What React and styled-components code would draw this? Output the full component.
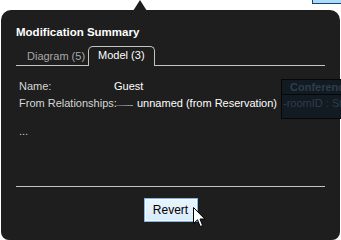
import React from "react";
import styled, { createGlobalStyle } from "styled-components";

const GlobalStyle = createGlobalStyle`
  html, body {
    margin: 0;
    padding: 0;
    background: #ffffff;
  }
  body {
    font-family: "Liberation Sans", Arial, sans-serif;
  }
`;

const Stage = styled.div`
  position: relative;
  width: 341px;
  height: 240px;
  overflow: hidden;
  background: #ffffff;
`;

const DiagramNode = styled.div`
  position: absolute;
  top: -2px;
  left: 312px;
  width: 40px;
  height: 4px;
  background: #a9dcf5;
  border: 1px solid #203c78;
`;

const Panel = styled.div`
  position: relative;
  margin: 10px 0 0 1px;
  width: 339px;
  height: 230px;
  box-sizing: border-box;
  background: #1e1e1e;
  border-radius: 10px 10px 8px 8px;
  display: flex;
  flex-direction: column;
  padding-top: 16px;

  &::before {
    content: "";
    position: absolute;
    top: -10px;
    left: 132px;
    border-left: 7px solid transparent;
    border-right: 7px solid transparent;
    border-bottom: 11px solid #1e1e1e;
  }
`;

const Title = styled.div`
  padding: 0 16px 0 15px;
  font-size: 11.5px;
  line-height: 13px;
  font-weight: bold;
  color: #ffffff;
`;

const TabBar = styled.div`
  display: flex;
  align-items: flex-end;
  margin: 7px 15px 0 15px;
  height: 20px;
`;

const Tab = styled.div`
  font-size: 11px;
  box-sizing: border-box;
  height: ${(p) => (p.$active ? "20px" : "19px")};
  line-height: ${(p) => (p.$active ? "17px" : "18px")};
  padding: ${(p) => (p.$active ? "0 9px" : "0 3px 0 11px")};
  color: ${(p) => (p.$active ? "#ffffff" : "#a8a8a8")};
  border: ${(p) => (p.$active ? "1px solid #c4c4c4" : "none")};
  border-bottom: ${(p) => (p.$active ? "none" : "1px solid #c4c4c4")};
  border-radius: ${(p) => (p.$active ? "5px 5px 0 0" : "0")};
  white-space: nowrap;
`;

const TabFill = styled.div`
  flex: 1;
  height: 19px;
  box-sizing: border-box;
  border-bottom: 1px solid #c4c4c4;
`;

const Content = styled.div`
  flex: 1;
  padding: 12px 16px 0 18px;
  font-size: 11px;
  line-height: 17px;
`;

const Row = styled.div`
  display: flex;
  align-items: center;
  white-space: nowrap;
`;

const Label = styled.span`
  width: 95px;
  color: #d6d6d6;
`;

const Value = styled.span`
  color: #ffffff;
`;

const Link = styled.span`
  width: 18px;
  height: 1px;
  margin: 3px 4px 0 1px;
  background: linear-gradient(90deg, #555555, #9a9a9a);
`;

const More = styled.div`
  margin-top: 11px;
  color: #c8c8c8;
`;

const Separator = styled.div`
  margin: 0 15px 0 15px;
  height: 1px;
  background: #c4c4c4;
`;

const Footer = styled.div`
  display: flex;
  justify-content: center;
  padding: 11px 0 18px 0;
`;

const Button = styled.button`
  width: 54px;
  height: 24px;
  padding: 0;
  font-family: "Liberation Sans", Arial, sans-serif;
  font-size: 12px;
  color: #000000;
  background: linear-gradient(#eaf5fd, #d7ebfa);
  border: 1px solid #7eb4ea;
  box-shadow: inset 0 0 0 1px #f4faff;
  border-radius: 0;
`;

const UmlBox = styled.div`
  position: absolute;
  left: 281px;
  top: 79px;
  width: 80px;
  height: 40px;
  box-sizing: border-box;
  background: #121a22;
  border: 1px solid #050708;
  font-size: 11px;
  color: #2f3d4c;
`;

const UmlHead = styled.div`
  height: 14px;
  line-height: 14px;
  padding-left: 8px;
  font-weight: bold;
  border-bottom: 1px solid #050708;
  white-space: nowrap;
`;

const UmlAttr = styled.div`
  line-height: 16px;
  padding-left: 1px;
  white-space: nowrap;
`;

const Cursor = styled.svg`
  position: absolute;
  left: 193px;
  top: 207px;
`;

export default function App() {
  return (
    <Stage>
      <GlobalStyle />
      <DiagramNode />
      <Panel>
        <Title>Modification Summary</Title>
        <TabBar>
          <Tab>Diagram (5)</Tab>
          <Tab $active>Model (3)</Tab>
          <TabFill />
        </TabBar>
        <Content>
          <Row>
            <Label>Name:</Label>
            <Value>Guest</Value>
          </Row>
          <Row>
            <Label>From Relationships:</Label>
            <Link />
            <Value>unnamed (from Reservation)</Value>
          </Row>
          <More>...</More>
        </Content>
        <Separator />
        <Footer>
          <Button>Revert</Button>
        </Footer>
      </Panel>
      <UmlBox>
        <UmlHead>Conference</UmlHead>
        <UmlAttr>-roomID : String</UmlAttr>
      </UmlBox>
      <Cursor width="13" height="21" viewBox="0 0 13 21">
        <path
          d="M0.5 0.5 L0.5 16.5 L4.5 12.8 L7.2 19.5 L9.6 18.5 L7 12 L11.8 12 Z"
          fill="#ffffff"
          stroke="#000000"
          strokeWidth="1"
          strokeLinejoin="miter"
        />
      </Cursor>
    </Stage>
  );
}
